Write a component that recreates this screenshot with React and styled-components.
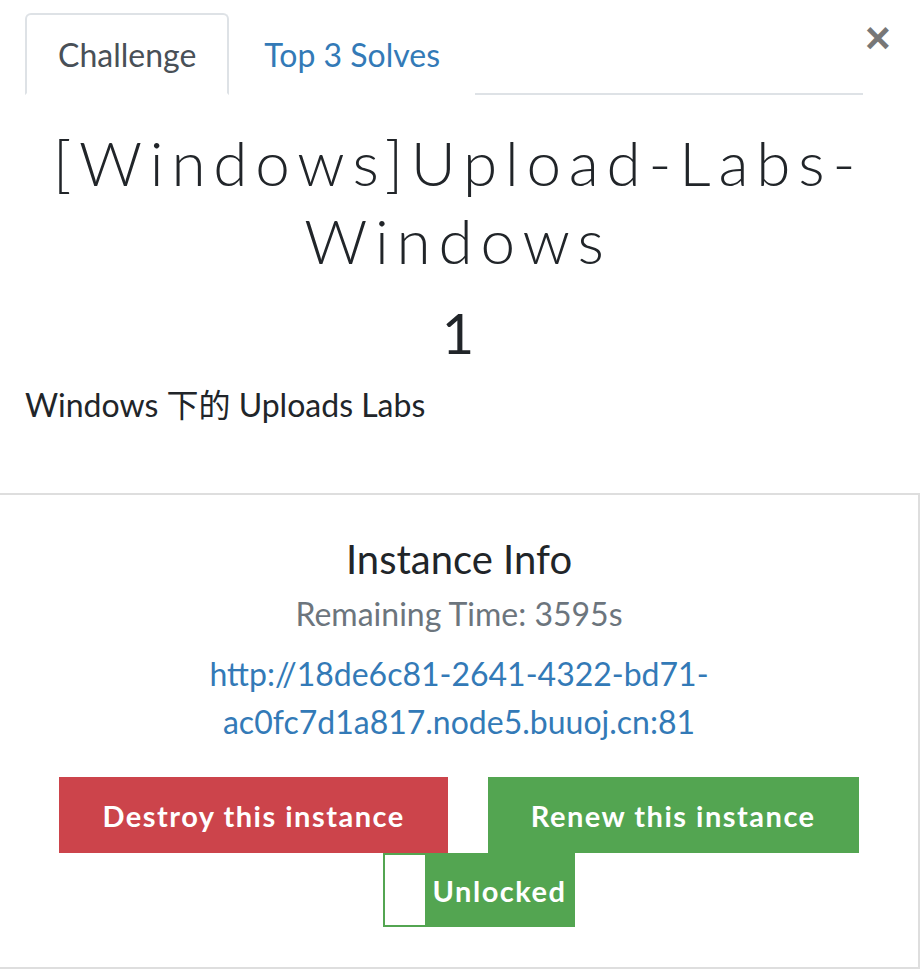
import React, { useState } from "react";
import styled, { createGlobalStyle } from "styled-components";

const GlobalStyle = createGlobalStyle`
  html, body {
    margin: 0;
    padding: 0;
    background: #fff;
  }
  body {
    font-family: Lato, "Noto Sans CJK SC", sans-serif;
    font-size: 32px;
    color: #212529;
  }
  * {
    box-sizing: border-box;
  }
`;

const App = () => {
  const [activeTab, setActiveTab] = useState("challenge");

  return (
    <Modal>
      <GlobalStyle />
      <Header>
        <Tabs>
          <Tab
            $active={activeTab === "challenge"}
            onClick={() => setActiveTab("challenge")}
          >
            Challenge
          </Tab>
          <Tab
            $active={activeTab === "solves"}
            onClick={() => setActiveTab("solves")}
          >
            Top 3 Solves
          </Tab>
        </Tabs>
        <Close aria-label="Close">×</Close>
      </Header>

      <Body>
        <Title>[Windows]Upload-Labs-Windows</Title>
        <Value>1</Value>
        <Description>Windows 下的 Uploads Labs</Description>
      </Body>

      <InstancePanel>
        <PanelTitle>Instance Info</PanelTitle>
        <Remaining>Remaining Time: 3595s</Remaining>
        <InstanceLink href="#">
          http://18de6c81-2641-4322-bd71-
          <br />
          ac0fc7d1a817.node5.buuoj.cn:81
        </InstanceLink>
        <Actions>
          <ActionButton $variant="danger">Destroy this instance</ActionButton>
          <ActionButton $variant="success">Renew this instance</ActionButton>
        </Actions>
        <Toggle>
          <ToggleKnob />
          <ToggleLabel>Unlocked</ToggleLabel>
        </Toggle>
      </InstancePanel>
    </Modal>
  );
};

export default App;

const Modal = styled.div`
  width: 922px;
  padding-top: 13px;
`;

const Header = styled.div`
  display: flex;
  align-items: flex-start;
  padding-left: 25px;
`;

const Tabs = styled.div`
  display: flex;
  width: 838px;
  border-bottom: 2px solid #dee2e6;
`;

const Tab = styled.div`
  height: 82px;
  display: flex;
  align-items: center;
  padding: 0 ${(p) => (p.$active ? "31px" : "33px")};
  font-size: 32px;
  cursor: pointer;
  margin-bottom: -2px;
  border: 2px solid ${(p) => (p.$active ? "#dee2e6" : "transparent")};
  border-bottom-color: ${(p) => (p.$active ? "#fff" : "transparent")};
  border-radius: 6px 6px 0 0;
  color: ${(p) => (p.$active ? "#495057" : "#337ab7")};
  background: #fff;
`;

const Close = styled.button`
  border: none;
  background: none;
  padding: 0;
  margin: 3px 0 0 2px;
  font-family: "Liberation Sans", Arial, sans-serif;
  font-size: 44px;
  font-weight: 700;
  line-height: 1;
  color: #777;
  cursor: pointer;
`;

const Body = styled.div`
  padding: 0 31px 0 25px;
`;

const Title = styled.h2`
  margin: 28px 0 0;
  text-align: center;
  font-family: Lato, sans-serif;
  font-weight: 300;
  font-size: 62px;
  letter-spacing: 7.8px;
  line-height: 78px;
  color: #212529;
`;

const Value = styled.h3`
  margin: 20px 0 0;
  text-align: center;
  font-weight: 400;
  font-size: 56px;
  line-height: 68px;
`;

const Description = styled.p`
  margin: 18px 0 0;
  font-size: 32px;
  line-height: 40px;
`;

const InstancePanel = styled.div`
  margin-top: 68px;
  width: 920px;
  border: 2px solid #dedede;
  border-left: none;
  padding: 40px 0 40px;
  display: flex;
  flex-direction: column;
  align-items: center;
  text-align: center;
`;

const PanelTitle = styled.h4`
  margin: 0;
  font-weight: 400;
  font-size: 40px;
  line-height: 48px;
`;

const Remaining = styled.p`
  margin: 11px 0 0;
  color: #6c757d;
  font-size: 32px;
  line-height: 40px;
`;

const InstanceLink = styled.a`
  margin-top: 16px;
  color: #337ab7;
  text-decoration: none;
  font-size: 32px;
  line-height: 48px;
`;

const Actions = styled.div`
  display: flex;
  justify-content: center;
  gap: 40px;
  margin-top: 31px;
`;

const ActionButton = styled.button`
  height: 76px;
  border: none;
  border-radius: 0;
  padding: 0 43px;
  font-family: Lato, sans-serif;
  font-size: 29px;
  font-weight: 700;
  letter-spacing: 1.5px;
  color: #fff;
  background: ${(p) => (p.$variant === "danger" ? "#cc444b" : "#53a551")};
  cursor: pointer;
`;

const Toggle = styled.label`
  display: flex;
  margin-left: 40px;
  height: 74px;
  border: 2px solid #53a551;
  background: #53a551;
  cursor: pointer;
`;

const ToggleKnob = styled.span`
  width: 40px;
  background: #fff;
`;

const ToggleLabel = styled.span`
  display: flex;
  align-items: center;
  padding: 0 7px 0 8px;
  color: #fff;
  font-weight: 700;
  font-size: 29px;
  letter-spacing: 1.5px;
`;
